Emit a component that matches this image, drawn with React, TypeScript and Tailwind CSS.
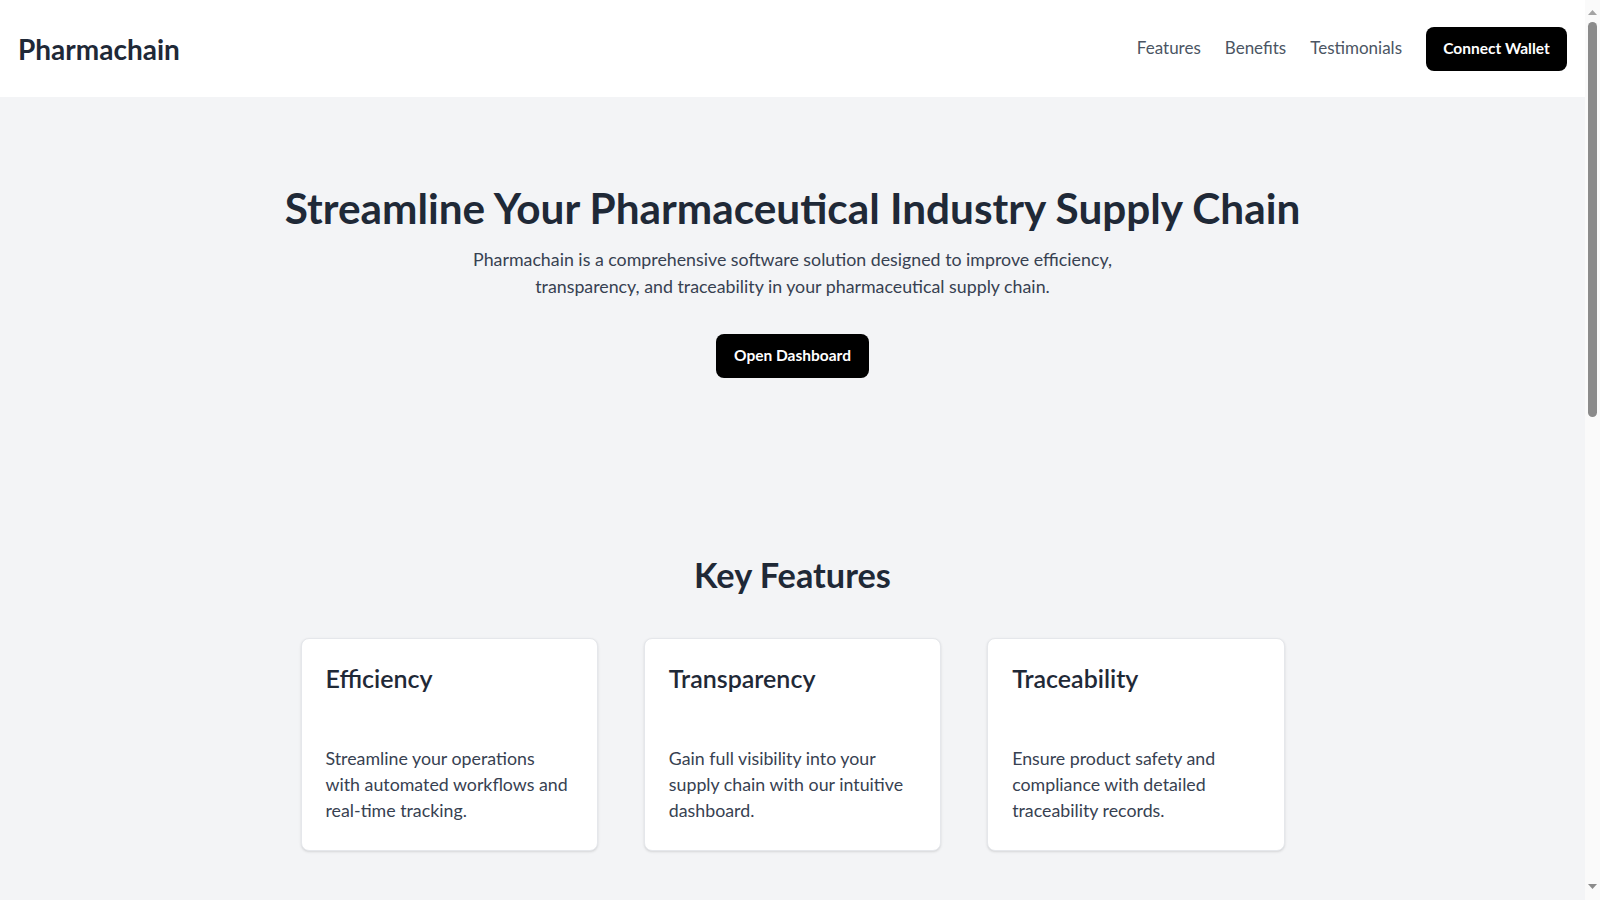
import React from "react";

const features = [
  {
    title: "Efficiency",
    text: "Streamline your operations with automated workflows and real-time tracking.",
  },
  {
    title: "Transparency",
    text: "Gain full visibility into your supply chain with our intuitive dashboard.",
  },
  {
    title: "Traceability",
    text: "Ensure product safety and compliance with detailed traceability records.",
  },
];

function Scrollbar() {
  return (
    <aside className="flex h-full w-[15px] shrink-0 flex-col items-center bg-[#fafafa]">
      <svg className="mt-[10px]" width="9" height="5" viewBox="0 0 9 5">
        <polygon points="4.5,0 9,5 0,5" fill="#a3a3a3" />
      </svg>
      <div className="mt-[7px] h-[395px] w-[9px] rounded-full bg-[#8b8b8b]" />
      <div className="flex-1" />
      <svg className="mb-[11px]" width="9" height="5" viewBox="0 0 9 5">
        <polygon points="0,0 9,0 4.5,5" fill="#8b8b8b" />
      </svg>
    </aside>
  );
}

export default function App() {
  return (
    <div className="flex h-screen w-full overflow-hidden font-['Lato',sans-serif] text-[#1f2937]">
      <main className="h-full flex-1 overflow-hidden bg-[#f3f4f6]">
        <header className="flex h-[97px] items-center justify-between bg-white px-[18px]">
          <div className="text-[28px] font-bold leading-8 text-[#1f2937]">Pharmachain</div>
          <nav className="flex items-center gap-6">
            <a className="-mt-px text-[17px] leading-6 text-[#4b5563]">Features</a>
            <a className="-mt-px text-[17px] leading-6 text-[#4b5563]">Benefits</a>
            <a className="-mt-px text-[17px] leading-6 text-[#4b5563]">Testimonials</a>
            <button className="flex h-11 w-[141px] items-center justify-center rounded-lg bg-black text-[15.5px] font-bold text-white">
              Connect Wallet
            </button>
          </nav>
        </header>

        <section className="flex flex-col items-center px-4 pt-[87px] text-center">
          <h1 className="text-[42.3px] font-bold leading-[48px] text-[#1f2937]">
            Streamline Your Pharmaceutical Industry Supply Chain
          </h1>
          <p className="mt-[14px] max-w-[672px] text-[17.8px] leading-[26.5px] text-[#374151]">
            Pharmachain is a comprehensive software solution designed to improve efficiency,
            transparency, and traceability in your pharmaceutical supply chain.
          </p>
          <button className="mt-[35px] flex h-11 w-[153px] items-center justify-center rounded-lg bg-black text-[15.5px] font-bold text-white">
            Open Dashboard
          </button>
        </section>

        <section className="flex flex-col items-center pt-[177px]">
          <h2 className="text-[34.3px] font-bold leading-10 text-[#1f2937]">Key Features</h2>
          <div className="mt-[43px] grid w-[984px] grid-cols-3 gap-[46px]">
            {features.map((f) => (
              <div
                key={f.title}
                className="rounded-lg border border-[#e5e7eb] bg-white px-6 pt-[23px] pb-[27px] shadow-sm"
              >
                <h3 className="text-[25px] font-semibold leading-8 text-[#1f2937]">{f.title}</h3>
                <p className="mt-[51px] text-[17.8px] leading-[26px] text-[#374151]">{f.text}</p>
              </div>
            ))}
          </div>
        </section>
      </main>
      <Scrollbar />
    </div>
  );
}
